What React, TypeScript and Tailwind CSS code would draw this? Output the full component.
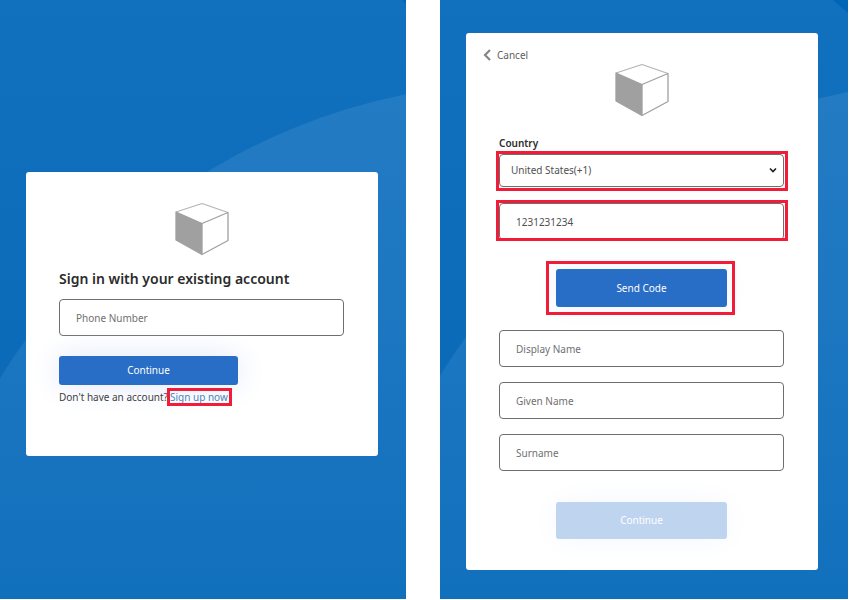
import React, { useId, useState } from "react";

function CubeLogo() {
  return (
    <svg width="54" height="54" viewBox="0 0 54 54" fill="none" role="img" aria-label="Company logo">
      <path d="M1 10 27 21.5V52.5L1 38Z" fill="#a0a0a0" />
      <path d="M1 10 27 1.5 53 10.5" stroke="#b4b4b4" strokeWidth="1.2" strokeLinejoin="round" />
      <path d="M1 10 27 21.5 53 10.5V38.5L27 52.5 1 38Z" stroke="#a0a0a0" strokeWidth="1.3" strokeLinejoin="round" />
      <path d="M27 21.5V52.5" stroke="#a0a0a0" strokeWidth="1.3" />
    </svg>
  );
}

function Backdrop({ circleX, circleY, corner }: { circleX: number; circleY: number; corner: string }) {
  const id = useId();
  return (
    <svg
      className="absolute inset-0 h-full w-full"
      viewBox="0 0 408 600"
      preserveAspectRatio="xMaxYMin slice"
      aria-hidden="true"
    >
      <defs>
        <linearGradient id={`${id}base`} x1="0" y1="0" x2="0" y2="1">
          <stop offset="0" stopColor="#1271be" />
          <stop offset="0.6" stopColor="#0b6bb9" />
          <stop offset="1" stopColor="#096ab8" />
        </linearGradient>
        <linearGradient id={`${id}disc`} gradientUnits="userSpaceOnUse" x1="0" y1="90" x2="0" y2="600">
          <stop offset="0" stopColor="#237bc3" />
          <stop offset="0.6" stopColor="#1a75c0" />
          <stop offset="1" stopColor="#1170bc" />
        </linearGradient>
      </defs>
      <rect width="408" height="600" fill={`url(#${id}base)`} />
      <path d={corner} fill="#0067b8" />
      <circle cx={circleX} cy={circleY} r="621" fill={`url(#${id}disc)`} />
    </svg>
  );
}

function Highlight({ className }: { className: string }) {
  return <span aria-hidden="true" className={`pointer-events-none absolute border-3 border-[#f01c38] ${className}`} />;
}

const fieldClass =
  "block h-[37px] w-full rounded-[4px] border border-[#6e6e6e] bg-white px-4 text-[10px] text-[#505050] placeholder:text-[#707070] placeholder:opacity-100 outline-none";

function Field({ label, defaultValue, type = "text" }: { label: string; defaultValue?: string; type?: string }) {
  return <input type={type} aria-label={label} placeholder={label} defaultValue={defaultValue} className={fieldClass} />;
}

function SignInPanel() {
  return (
    <section className="relative pt-[172px] pr-[28px] pl-[26px]">
      <Backdrop circleX={531} circleY={703} corner="M404 0H408V4Z" />
      <form className="relative h-[284px] rounded-[3px] bg-white pt-[30px] pr-[34px] pl-[33px]" onSubmit={(e) => e.preventDefault()}>
        <div className="flex justify-center">
          <CubeLogo />
        </div>
        <h1 className="mt-[13px] text-[14px] leading-5 font-semibold whitespace-nowrap text-[#2b2b2b]">
          Sign in with your existing account
        </h1>
        <div className="mt-[10px]">
          <Field label="Phone Number" type="tel" />
        </div>
        <button
          type="submit"
          className="mt-5 block h-[29px] w-[179px] rounded-[3px] bg-[#286dc6] text-[10px] text-white shadow-[0_0_30px_0_#e1e6fa]"
        >
          Continue
        </button>
        <p className="relative mt-[6px] flex text-[10px] leading-3 whitespace-nowrap text-[#404040]">
          Don't have an account?
          <a href="#signup" className="ml-[2px] pr-px text-[#4a82bd] outline-3 outline-[#f01c38]">
            Sign up now
          </a>
        </p>
      </form>
    </section>
  );
}

function SignUpPanel() {
  const [country, setCountry] = useState("us");
  return (
    <section className="relative pt-[33px] pr-[30px] pl-[26px]">
      <Backdrop circleX={529} circleY={701} corner="M393 0H408V13Z" />
      <form className="relative h-[537px] rounded-[3px] bg-white pt-[14px] pr-[34px] pl-[33px]" onSubmit={(e) => e.preventDefault()}>
        <button type="button" className="-ml-4 flex h-4 items-center gap-[6px] text-[10px] text-[#606060]">
          <svg width="8" height="12" viewBox="0 0 8 12" fill="none" stroke="#858585" strokeWidth="2.2" aria-hidden="true">
            <path d="M7 1 2 6l5 5" />
          </svg>
          Cancel
        </button>
        <div className="flex justify-center">
          <CubeLogo />
        </div>
        <label htmlFor="country" className="mt-[18px] block text-[10px] leading-4 font-semibold text-[#2b2b2b]">
          Country
        </label>
        <div className="relative mt-[3px]">
          <select
            id="country"
            value={country}
            onChange={(e) => setCountry(e.target.value)}
            className="block h-[33px] w-full appearance-none rounded-[4px] border border-[#6e6e6e] bg-white px-[11px] text-[10px] text-[#505050] outline-none"
          >
            <option value="us">United States(+1)</option>
          </select>
          <svg
            className="pointer-events-none absolute top-[13px] right-[7px]"
            width="8"
            height="7"
            viewBox="0 0 8 7"
            fill="none"
            stroke="#1c1c1c"
            strokeWidth="1.6"
            aria-hidden="true"
          >
            <path d="M1 1.5 4 4.5l3-3" />
          </svg>
          <Highlight className="-top-[3px] -right-1 -bottom-1 -left-[3px]" />
        </div>
        <div className="relative mt-4">
          <Field label="Phone Number" type="tel" defaultValue="1231231234" />
          <Highlight className="-top-[3px] -right-1 -bottom-px -left-[3px]" />
        </div>
        <div className="relative mx-auto mt-[29px] w-[171px]">
          <button
            type="button"
            className="block h-[38px] w-full rounded-[3px] bg-[#286dc6] text-[10px] text-white shadow-[0_0_24px_0_#eef1fc]"
          >
            Send Code
          </button>
          <Highlight className="-top-2 -right-2 -bottom-2 -left-[10px]" />
        </div>
        <div className="mt-[23px] flex flex-col gap-[15px]">
          <Field label="Display Name" />
          <Field label="Given Name" />
          <Field label="Surname" />
        </div>
        <button
          type="submit"
          disabled
          className="mx-auto mt-[31px] block h-[37px] w-[171px] rounded-[3px] bg-[#bfd4ef] text-[10px] text-white shadow-[0_0_30px_0_#f5f7fe]"
        >
          Continue
        </button>
      </form>
    </section>
  );
}

export default function App() {
  return (
    <main className="grid min-h-screen grid-cols-[406fr_408fr] gap-[34px] bg-white pr-[2px] pb-px font-['Noto_Sans','Open_Sans',sans-serif]">
      <SignInPanel />
      <SignUpPanel />
    </main>
  );
}
